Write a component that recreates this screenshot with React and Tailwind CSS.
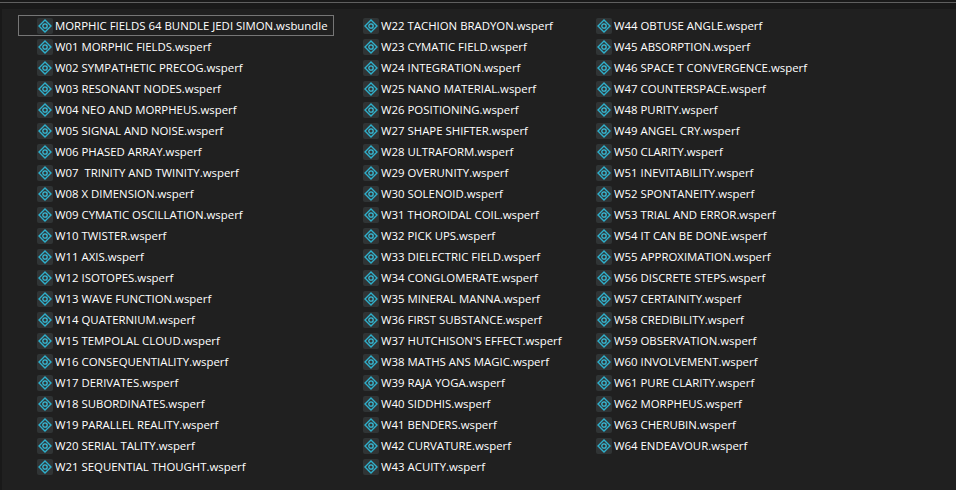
const columns = [
  [
    "MORPHIC FIELDS 64 BUNDLE JEDI SIMON.wsbundle",
    "W01 MORPHIC FIELDS.wsperf",
    "W02 SYMPATHETIC PRECOG.wsperf",
    "W03 RESONANT NODES.wsperf",
    "W04 NEO AND MORPHEUS.wsperf",
    "W05 SIGNAL AND NOISE.wsperf",
    "W06 PHASED ARRAY.wsperf",
    "W07  TRINITY AND TWINITY.wsperf",
    "W08 X DIMENSION.wsperf",
    "W09 CYMATIC OSCILLATION.wsperf",
    "W10 TWISTER.wsperf",
    "W11 AXIS.wsperf",
    "W12 ISOTOPES.wsperf",
    "W13 WAVE FUNCTION.wsperf",
    "W14 QUATERNIUM.wsperf",
    "W15 TEMPOLAL CLOUD.wsperf",
    "W16 CONSEQUENTIALITY.wsperf",
    "W17 DERIVATES.wsperf",
    "W18 SUBORDINATES.wsperf",
    "W19 PARALLEL REALITY.wsperf",
    "W20 SERIAL TALITY.wsperf",
    "W21 SEQUENTIAL THOUGHT.wsperf",
  ],
  [
    "W22 TACHION BRADYON.wsperf",
    "W23 CYMATIC FIELD.wsperf",
    "W24 INTEGRATION.wsperf",
    "W25 NANO MATERIAL.wsperf",
    "W26 POSITIONING.wsperf",
    "W27 SHAPE SHIFTER.wsperf",
    "W28 ULTRAFORM.wsperf",
    "W29 OVERUNITY.wsperf",
    "W30 SOLENOID.wsperf",
    "W31 THOROIDAL COIL.wsperf",
    "W32 PICK UPS.wsperf",
    "W33 DIELECTRIC FIELD.wsperf",
    "W34 CONGLOMERATE.wsperf",
    "W35 MINERAL MANNA.wsperf",
    "W36 FIRST SUBSTANCE.wsperf",
    "W37 HUTCHISON'S EFFECT.wsperf",
    "W38 MATHS ANS MAGIC.wsperf",
    "W39 RAJA YOGA.wsperf",
    "W40 SIDDHIS.wsperf",
    "W41 BENDERS.wsperf",
    "W42 CURVATURE.wsperf",
    "W43 ACUITY.wsperf",
  ],
  [
    "W44 OBTUSE ANGLE.wsperf",
    "W45 ABSORPTION.wsperf",
    "W46 SPACE T CONVERGENCE.wsperf",
    "W47 COUNTERSPACE.wsperf",
    "W48 PURITY.wsperf",
    "W49 ANGEL CRY.wsperf",
    "W50 CLARITY.wsperf",
    "W51 INEVITABILITY.wsperf",
    "W52 SPONTANEITY.wsperf",
    "W53 TRIAL AND ERROR.wsperf",
    "W54 IT CAN BE DONE.wsperf",
    "W55 APPROXIMATION.wsperf",
    "W56 DISCRETE STEPS.wsperf",
    "W57 CERTAINITY.wsperf",
    "W58 CREDIBILITY.wsperf",
    "W59 OBSERVATION.wsperf",
    "W60 INVOLVEMENT.wsperf",
    "W61 PURE CLARITY.wsperf",
    "W62 MORPHEUS.wsperf",
    "W63 CHERUBIN.wsperf",
    "W64 ENDEAVOUR.wsperf",
  ],
];

function FileIcon() {
  return (
    <span className="flex h-4 w-4 shrink-0 items-center justify-center rounded-[2px] bg-[#303435]">
      <svg width="14" height="14" viewBox="0 0 14 14" fill="none">
        <path d="M7 1 L13 7 L7 13 L1 7 Z" stroke="#2fb0cc" strokeWidth="1.4" />
        <circle cx="7" cy="7" r="2.2" stroke="#38bcd8" strokeWidth="1.3" />
      </svg>
    </span>
  );
}

function Row({ name, selected }) {
  return (
    <div
      className={
        "flex h-[21px] items-center gap-[2px] border pl-[18px] " +
        (selected ? "border-[#767676] w-[316px]" : "border-transparent")
      }
    >
      <FileIcon />
      <span className="whitespace-pre text-[11.4px] leading-none text-white">{name}</span>
    </div>
  );
}

export default function App() {
  return (
    <div
      className="flex h-[490px] w-[956px] flex-col overflow-hidden bg-[#191919]"
      style={{ fontFamily: '"Open Sans", "Noto Sans", sans-serif' }}
    >
      <div className="mt-[2px] h-[1px] bg-[#5f5f5f]" />
      <div className="h-[6px] bg-[#191919]" />
      <div className="flex flex-1 border-l-2 border-[#191919] bg-[#202020] pt-[6px] pl-[16px]">
        <div className="w-[326px]">
          {columns[0].map((n, i) => (
            <Row key={n} name={n} selected={i === 0} />
          ))}
        </div>
        <div className="w-[233px]">
          {columns[1].map((n) => (
            <Row key={n} name={n} />
          ))}
        </div>
        <div className="w-[300px]">
          {columns[2].map((n) => (
            <Row key={n} name={n} />
          ))}
        </div>
      </div>
    </div>
  );
}
